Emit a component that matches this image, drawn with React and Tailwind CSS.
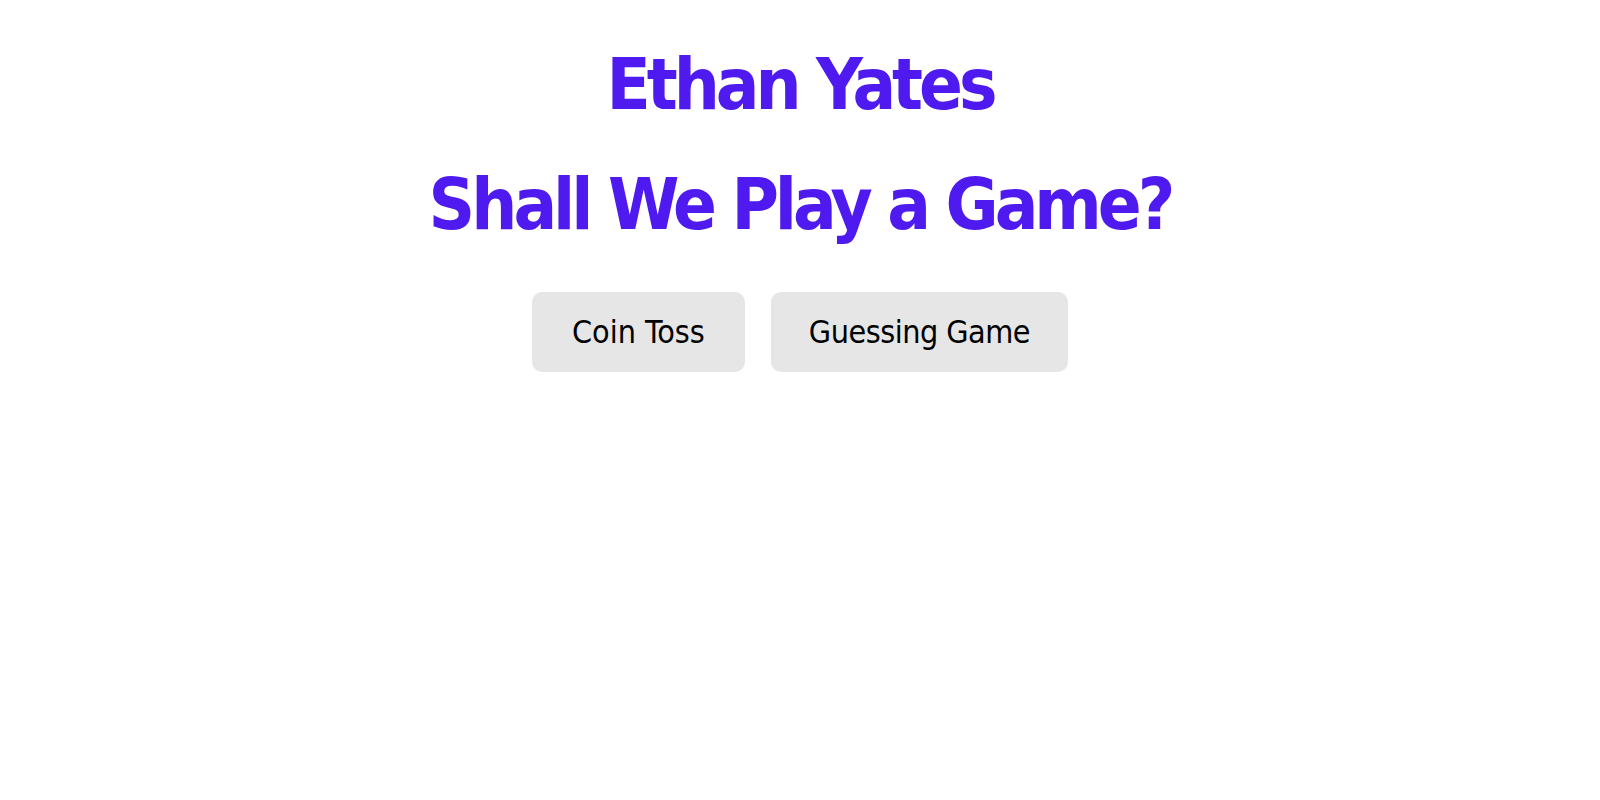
export default function App() {
  return (
    <div className="min-h-screen bg-white text-center" style={{ fontFamily: '"DejaVu Sans Condensed", "DejaVu Sans", sans-serif' }}>
      <h1 className="pt-[48px] text-[72px] leading-[72px] font-bold tracking-[-4px] text-[#4f1af0]">Ethan Yates</h1>
      <h2 className="mt-[48px] text-[72px] leading-[72px] font-bold tracking-[-4px] text-[#4f1af0]">Shall We Play a Game?</h2>
      <div className="mt-[52px] flex justify-center gap-[26px]">
        <button className="h-[80px] px-[40px] rounded-[10px] bg-[#e6e6e6] text-[32px] text-black">Coin Toss</button>
        <button className="h-[80px] px-[38px] rounded-[10px] bg-[#e6e6e6] text-[32px] tracking-[-0.5px] text-black">Guessing Game</button>
      </div>
    </div>
  );
}
